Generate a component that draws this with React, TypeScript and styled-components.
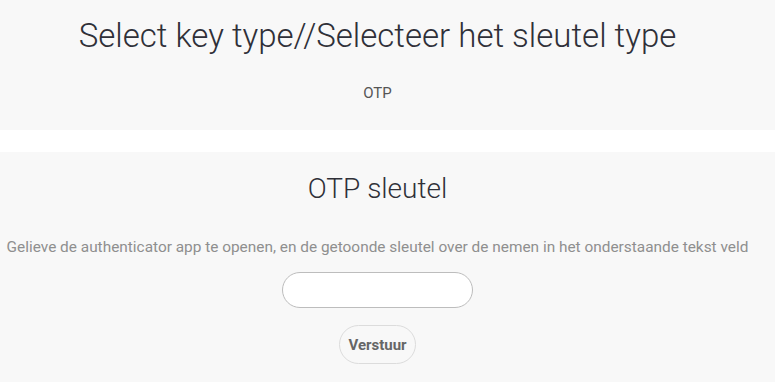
import React from "react";
import styled, { createGlobalStyle } from "styled-components";

const Global = createGlobalStyle`
  html, body { margin: 0; padding: 0; background: #ffffff; }
  body { font-family: Roboto, "Noto Sans", "Liberation Sans", sans-serif; }
  * { box-sizing: border-box; }
`;

const Page = styled.div`
  display: flex;
  flex-direction: column;
  gap: 22px;
  width: 775px;
`;

const Panel = styled.section<{ $height: number }>`
  background: #f8f8f8;
  height: ${(p) => p.$height}px;
  padding-right: 20px;
  display: flex;
  flex-direction: column;
  align-items: center;
  text-align: center;
`;

const Title = styled.h1`
  margin: 16px 0 0;
  font-size: 33px;
  line-height: 39px;
  font-weight: 300;
  color: #2f3038;
`;

const KeyType = styled.div`
  margin-top: 29px;
  font-size: 15px;
  line-height: 19px;
  font-weight: 400;
  color: #555555;
`;

const SubTitle = styled.h2`
  margin: 20px 0 0;
  font-size: 28px;
  line-height: 33px;
  font-weight: 300;
  color: #2f3038;
`;

const Hint = styled.p`
  margin: 33px 0 0;
  font-size: 15.4px;
  line-height: 18px;
  font-weight: 400;
  color: #8f8f8f;
  white-space: nowrap;
`;

const Input = styled.input`
  margin-top: 16px;
  width: 191px;
  height: 36px;
  border: 1px solid #bdbdbd;
  border-radius: 18px;
  background: #ffffff;
  outline: none;
  padding: 0 14px;
  font-family: inherit;
  font-size: 14px;
`;

const Button = styled.button`
  margin-top: 17px;
  width: 77px;
  height: 39px;
  border: 1px solid #dcdcdc;
  border-radius: 20px;
  background: #f8f8f8;
  font-family: Roboto, "Liberation Sans", sans-serif;
  font-size: 15px;
  font-weight: 700;
  color: #666666;
  padding: 0;
  cursor: pointer;
`;

export default function App() {
  return (
    <>
      <Global />
      <Page>
        <Panel $height={130}>
          <Title>Select key type//Selecteer het sleutel type</Title>
          <KeyType>OTP</KeyType>
        </Panel>
        <Panel $height={230}>
          <SubTitle>OTP sleutel</SubTitle>
          <Hint>
            Gelieve de authenticator app te openen, en de getoonde sleutel over de nemen in het onderstaande tekst veld
          </Hint>
          <Input type="text" />
          <Button>Verstuur</Button>
        </Panel>
      </Page>
    </>
  );
}
